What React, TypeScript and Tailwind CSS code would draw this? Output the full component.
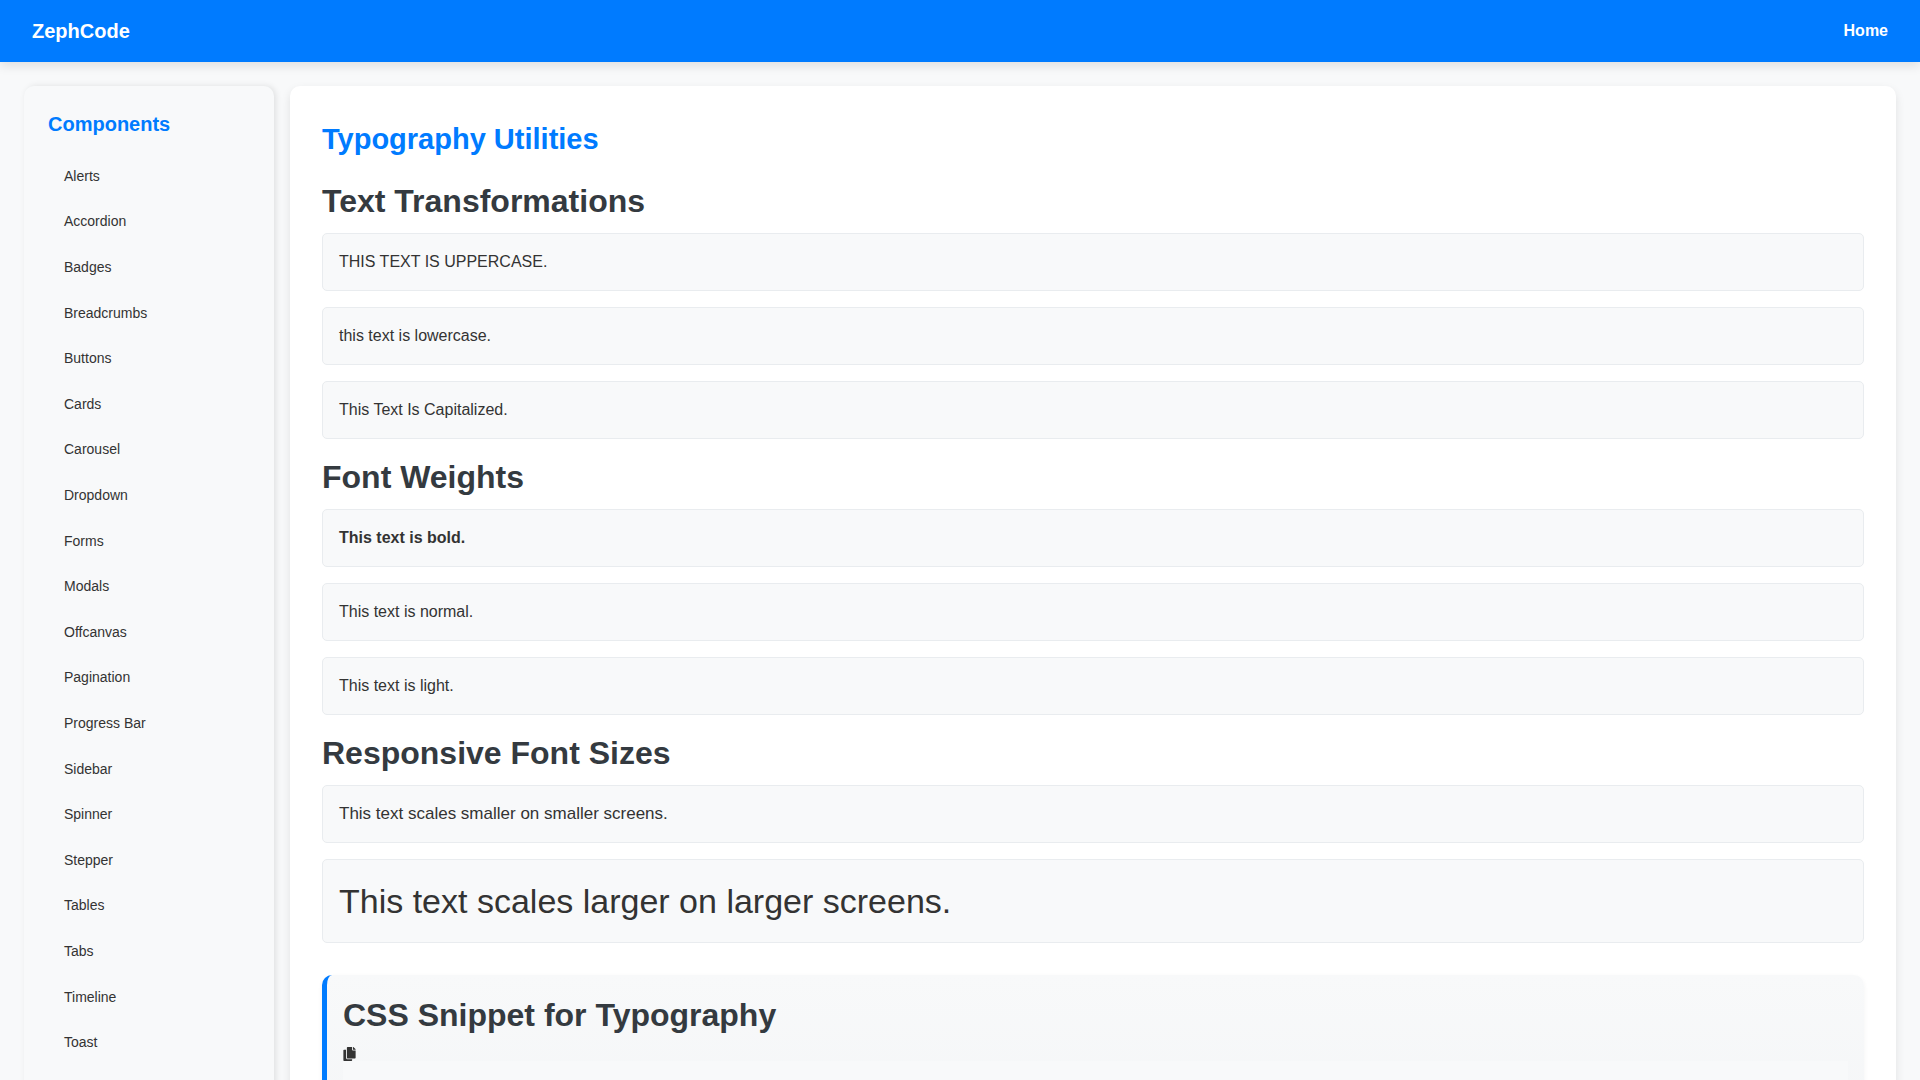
import { FaCopy } from "react-icons/fa";
import type { ReactNode } from "react";

const components = [
  "Alerts", "Accordion", "Badges", "Breadcrumbs", "Buttons", "Cards", "Carousel",
  "Dropdown", "Forms", "Modals", "Offcanvas", "Pagination", "Progress Bar", "Sidebar",
  "Spinner", "Stepper", "Tables", "Tabs", "Timeline", "Toast",
];

function SectionTitle({ children }: { children: ReactNode }) {
  return <h3 className="mb-2.5 text-[32px] leading-[44px] font-bold text-[#343a40]">{children}</h3>;
}

function Section({ title, children }: { title: string; children: ReactNode }) {
  return (
    <section className="mt-4">
      <SectionTitle>{title}</SectionTitle>
      <div className="flex flex-col gap-4">{children}</div>
    </section>
  );
}

function Sample({ className = "", children }: { className?: string; children: ReactNode }) {
  return (
    <div className="rounded-[5px] border border-[#e9ecef] bg-[#f8f9fa] p-4">
      <p className={className}>{children}</p>
    </div>
  );
}

export default function App() {
  return (
    <div className="h-screen overflow-hidden bg-[#f8f9fa] font-['Liberation_Sans',Arial,sans-serif] text-base leading-6 text-[#333]">
      <header className="relative flex items-center justify-between bg-[#007bff] px-8 py-4 text-white shadow-[0_4px_10px_rgba(0,0,0,0.1)]">
        <span className="text-xl leading-[30px] font-bold">ZephCode</span>
        <nav>
          <a href="#home" className="font-bold">Home</a>
        </nav>
      </header>

      <div className="flex items-stretch gap-4 p-6">
        <aside className="w-[250px] shrink-0 rounded-[10px] bg-[#f8f9fa] p-6 shadow-[2px_0_6px_rgba(0,0,0,0.1)]">
          <h2 className="mb-[15px] text-xl leading-7 font-bold text-[#007bff]">Components</h2>
          <ul className="grid min-h-[912px] auto-rows-fr">
            {components.map((name) => (
              <li key={name} className="flex items-center">
                <a href={"#" + name} className="px-4 text-sm">{name}</a>
              </li>
            ))}
          </ul>
        </aside>

        <main className="min-w-0 flex-1 rounded-[10px] bg-white p-8 shadow-[0_4px_10px_rgba(0,0,0,0.1)]">
          <h1 className="mb-[18px] text-[29px] leading-[43px] font-bold text-[#007bff]">Typography Utilities</h1>

          <Section title="Text Transformations">
            <Sample className="uppercase">This text is uppercase.</Sample>
            <Sample className="lowercase">This text is lowercase.</Sample>
            <Sample className="capitalize">This text is capitalized.</Sample>
          </Section>

          <Section title="Font Weights">
            <Sample className="font-bold">This text is bold.</Sample>
            <Sample className="font-normal">This text is normal.</Sample>
            <Sample className="font-light">This text is light.</Sample>
          </Section>

          <Section title="Responsive Font Sizes">
            <Sample className="text-[17px] leading-6">This text scales smaller on smaller screens.</Sample>
            <Sample className="text-[34px] leading-[50px]">This text scales larger on larger screens.</Sample>
          </Section>

          <section className="mt-8 min-h-[640px] rounded-[10px] border-l-[5px] border-[#007bff] bg-linear-to-b from-[#f8f9fa] to-[#e9ecef] px-4 py-[18px] shadow-[0_2px_5px_rgba(0,0,0,0.05)]">
            <SectionTitle>CSS Snippet for Typography</SectionTitle>
            <button type="button" aria-label="Copy code" className="block">
              <FaCopy className="h-[14px] w-[13px]" />
            </button>
            <div className="min-h-[480px] bg-[#f8f9fa]" />
          </section>
        </main>
      </div>
    </div>
  );
}
